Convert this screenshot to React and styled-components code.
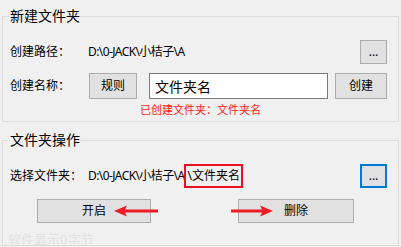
import styled, { createGlobalStyle } from "styled-components";

const GlobalStyle = createGlobalStyle`
  html, body {
    margin: 0;
    padding: 0;
    background: #f0f0f0;
  }
  body {
    font-family: "Noto Sans", "Noto Sans CJK SC", sans-serif;
    color: #000;
    overflow: hidden;
  }
`;

const Window = styled.div`
  position: relative;
  width: 401px;
  height: 247px;
  padding-top: 6px;
  box-sizing: border-box;
  overflow: hidden;
`;

const Group = styled.fieldset`
  margin: ${({ $top }) => $top}px 2px 0 2px;
  padding: 0 11px 0 7px;
  border: 1px solid #dcdcdc;
  min-inline-size: 0;
`;

const Legend = styled.legend`
  padding: 0;
  font-size: 14px;
  line-height: 20px;
`;

const Body = styled.div`
  display: flex;
  flex-direction: column;
  padding: 14px 0 ${({ $bottom }) => $bottom}px 0;
  gap: ${({ $gap }) => $gap}px;
`;

const Row = styled.div`
  display: flex;
  align-items: center;
  height: ${({ $h }) => $h}px;
`;

const Label = styled.span`
  width: 78px;
  flex: none;
  font-size: 12px;
  line-height: 16px;
  white-space: nowrap;
`;

const Path = styled.span`
  flex: 1;
  display: flex;
  align-items: center;
  font-size: 12px;
  line-height: 16px;
  letter-spacing: -0.6px;
  white-space: nowrap;
`;

const Marked = styled.span`
  display: inline-flex;
  align-items: center;
  height: 24px;
  padding: 0 1px;
  margin-left: 0;
  border: 2px solid #e81123;
  box-sizing: border-box;
  letter-spacing: 0;
`;

const Button = styled.button`
  flex: none;
  width: ${({ $w }) => $w}px;
  height: ${({ $h }) => $h}px;
  margin-left: ${({ $ml }) => $ml || 0}px;
  padding: 0;
  background: #e1e1e1;
  border: ${({ $focus }) => ($focus ? "2px solid #0078d7" : "1px solid #adadad")};
  border-radius: 0;
  font-family: inherit;
  font-size: 12px;
  line-height: 16px;
  color: #000;
`;

const NameInput = styled.input`
  flex: none;
  width: 179px;
  height: 26px;
  margin-left: 12px;
  box-sizing: border-box;
  border: 1px solid #7a7a7a;
  background: #fff;
  padding: 0 5px;
  font-family: inherit;
  font-size: 14px;
  color: #000;
  outline: none;
`;

const Hint = styled.div`
  margin-top: -6px;
  padding-left: 130px;
  font-size: 11px;
  line-height: 16px;
  color: #ff1a1a;
  white-space: nowrap;
`;

const ButtonRow = styled.div`
  position: relative;
  display: flex;
  height: 24px;
`;

const Arrow = styled.svg`
  position: absolute;
  top: 6px;
  left: ${({ $x }) => $x}px;
`;

const Ghost = styled.div`
  position: absolute;
  left: 8px;
  top: 232px;
  font-size: 13px;
  line-height: 15px;
  color: #e2e2e2;
  white-space: nowrap;
  pointer-events: none;
`;

const LeftArrow = ({ x }) => (
  <Arrow $x={x} width="44" height="12" viewBox="0 0 44 12">
    <path d="M0 6 L13 0.5 L11 4.4 L44 4.4 L44 7.6 L11 7.6 L13 11.5 Z" fill="#ec1c24" />
  </Arrow>
);

const RightArrow = ({ x }) => (
  <Arrow $x={x} width="42" height="12" viewBox="0 0 42 12">
    <path d="M42 6 L29 0.5 L31 4.4 L0 4.4 L0 7.6 L31 7.6 L29 11.5 Z" fill="#ec1c24" />
  </Arrow>
);

export default function App() {
  return (
    <>
      <GlobalStyle />
      <Window>
        <Group $top={0}>
          <Legend>新建文件夹</Legend>
          <Body $bottom={3} $gap={9}>
            <Row $h={24}>
              <Label>创建路径：</Label>
              <Path>D:\0-JACK\小桔子\A</Path>
              <Button $w={27} $h={24}>...</Button>
            </Row>
            <Row $h={26}>
              <Label>创建名称：</Label>
              <Button $w={48} $h={26} $ml={1}>规则</Button>
              <NameInput defaultValue="文件夹名" />
              <Button $w={52} $h={26} $ml={7}>创建</Button>
            </Row>
            <Hint>已创建文件夹：文件夹名</Hint>
          </Body>
        </Group>
        <Group $top={8}>
          <Legend>文件夹操作</Legend>
          <Body $bottom={22} $gap={11}>
            <Row $h={24}>
              <Label>选择文件夹：</Label>
              <Path>
                D:\0-JACK\小桔子\A<Marked>\文件夹名</Marked>
              </Path>
              <Button $w={27} $h={24} $focus>...</Button>
            </Row>
            <ButtonRow>
              <Button $w={114} $h={24} $ml={27}>开启</Button>
              <Button $w={116} $h={24} $ml={87}>删除</Button>
              <LeftArrow x={104} />
              <RightArrow x={221} />
            </ButtonRow>
          </Body>
        </Group>
        <Ghost>软件显示0字节</Ghost>
      </Window>
    </>
  );
}
